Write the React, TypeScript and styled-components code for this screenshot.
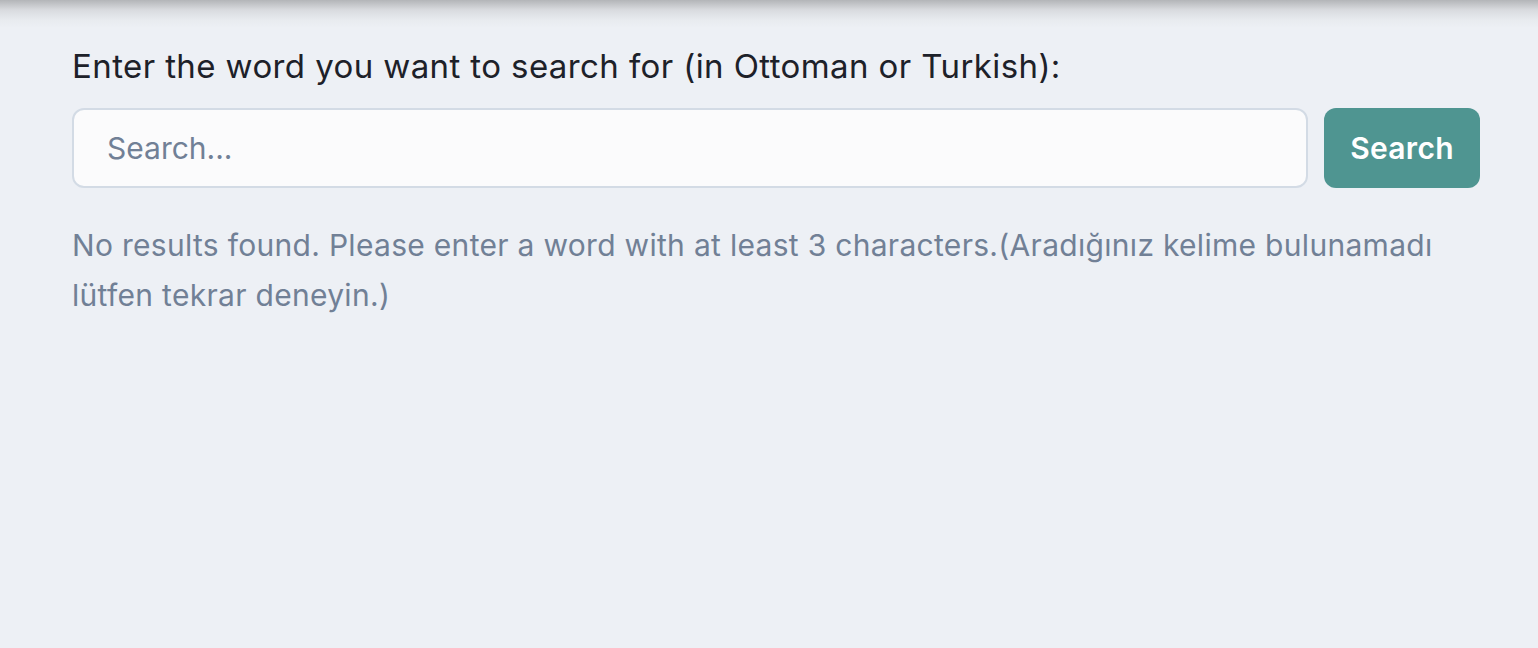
import React from "react";
import styled, { createGlobalStyle } from "styled-components";

const Global = createGlobalStyle`
  html, body { margin: 0; padding: 0; }
  body {
    background: #edf0f5;
    font-family: Inter, "Noto Sans", sans-serif;
    min-height: 648px;
  }
`;

const Page = styled.div`
  min-height: 648px;
  background: linear-gradient(to bottom, #b3b5b8 0px, #d9dbdf 10px, #e8ebef 20px, #edf0f5 28px);
  padding: 44px 58px 0 72px;
  box-sizing: border-box;
`;

const Label = styled.label`
  display: block;
  font-size: 33px;
  letter-spacing: 0.4px;
  line-height: 44px;
  color: #1d2129;
  margin-bottom: 20px;
`;

const Row = styled.form`
  display: flex;
  gap: 16px;
  margin: 0;
`;

const Input = styled.input`
  flex: 1;
  height: 80px;
  box-sizing: border-box;
  border: 2px solid #d3dbe5;
  border-radius: 12px;
  background: #fbfbfc;
  padding: 0 33px;
  font-family: inherit;
  font-size: 30px;
  color: #1d2129;
  outline: none;
  &::placeholder { color: #718096; }
`;

const Button = styled.button`
  height: 80px;
  width: 156px;
  border: none;
  border-radius: 12px;
  background: #4f9591;
  color: #ffffff;
  font-family: inherit;
  font-size: 30px;
  letter-spacing: 0.3px;
  font-weight: 600;
  cursor: pointer;
`;

const Message = styled.p`
  margin: 32px 0 0;
  font-size: 30px;
  letter-spacing: 0.3px;
  line-height: 50px;
  color: #718096;
`;

export default function App() {
  return (
    <>
      <Global />
      <Page>
        <Label htmlFor="q">Enter the word you want to search for (in Ottoman or Turkish):</Label>
        <Row onSubmit={(e) => e.preventDefault()}>
          <Input id="q" placeholder="Search..." />
          <Button type="submit">Search</Button>
        </Row>
        <Message>
          No results found. Please enter a word with at least 3 characters.(Aradığınız kelime bulunamadı lütfen tekrar deneyin.)
        </Message>
      </Page>
    </>
  );
}
